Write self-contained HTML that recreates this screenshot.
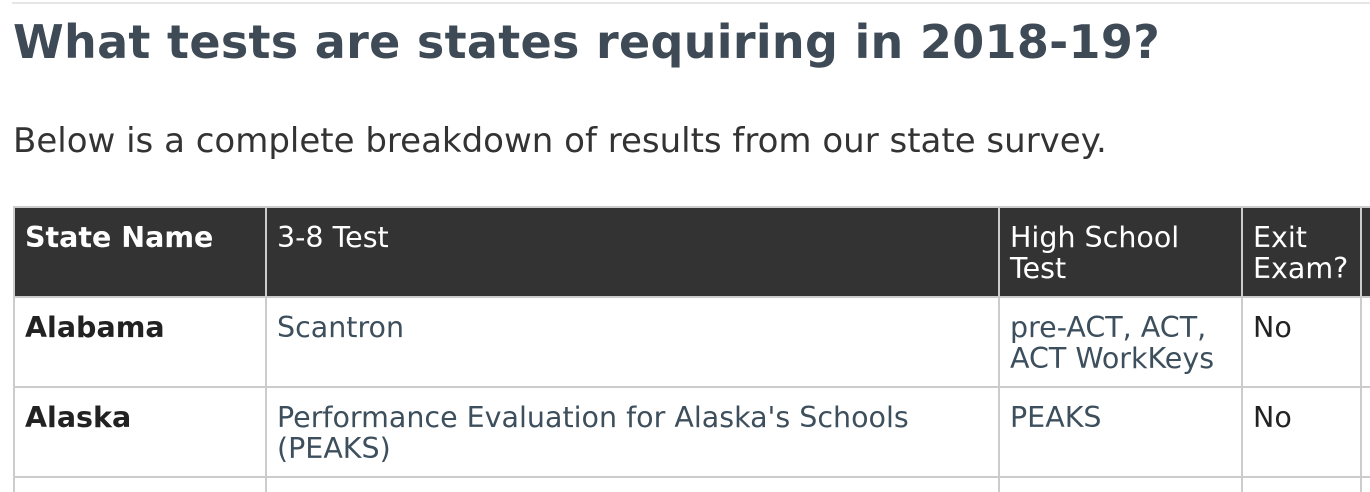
<!DOCTYPE html>
<html><head><meta charset="utf-8"><style>
html,body{margin:0;padding:0;background:#fff;width:1370px;height:492px;overflow:hidden}
body{font-family:"DejaVu Sans","Liberation Sans",sans-serif;position:relative}
.top{position:absolute;left:12px;right:0;top:2px;height:2px;background:#e6e6e6}
h1{position:absolute;left:13px;top:15px;margin:0;font-size:46px;font-weight:bold;color:#3e4a55;white-space:nowrap;letter-spacing:0.3px}
p{position:absolute;left:13px;top:121px;margin:0;font-size:34px;color:#333;white-space:nowrap}
table{position:absolute;left:13px;top:206px;border-collapse:collapse;table-layout:fixed;width:1400px;font-size:28.5px;line-height:31px}
td,th{border:2px solid #ccc;vertical-align:top;text-align:left;padding:14px 10px 0 10px;box-sizing:border-box;overflow:hidden}
th{background:#333;color:#fff;font-weight:normal;height:90px}
th.b{font-weight:bold}
td{height:90px;color:#3d4f5c}
td.s{font-weight:bold;color:#222}
td.n{color:#222}
</style></head><body>
<div class="top"></div>
<h1>What tests are states requiring in 2018-19?</h1>
<p>Below is a complete breakdown of results from our state survey.</p>
<table>
<colgroup><col style="width:252px"><col style="width:733px"><col style="width:243px"><col style="width:119px"><col style="width:53px"></colgroup>
<tr><th class="b">State Name</th><th>3-8 Test</th><th>High School Test</th><th>Exit Exam?</th><th></th></tr>
<tr><td class="s">Alabama</td><td>Scantron</td><td>pre-ACT, ACT, ACT WorkKeys</td><td class="n">No</td><td></td></tr>
<tr><td class="s">Alaska</td><td>Performance Evaluation for Alaska's Schools (PEAKS)</td><td>PEAKS</td><td class="n">No</td><td></td></tr>
<tr><td class="s"></td><td></td><td></td><td></td><td></td></tr>
</table>
</body></html>
